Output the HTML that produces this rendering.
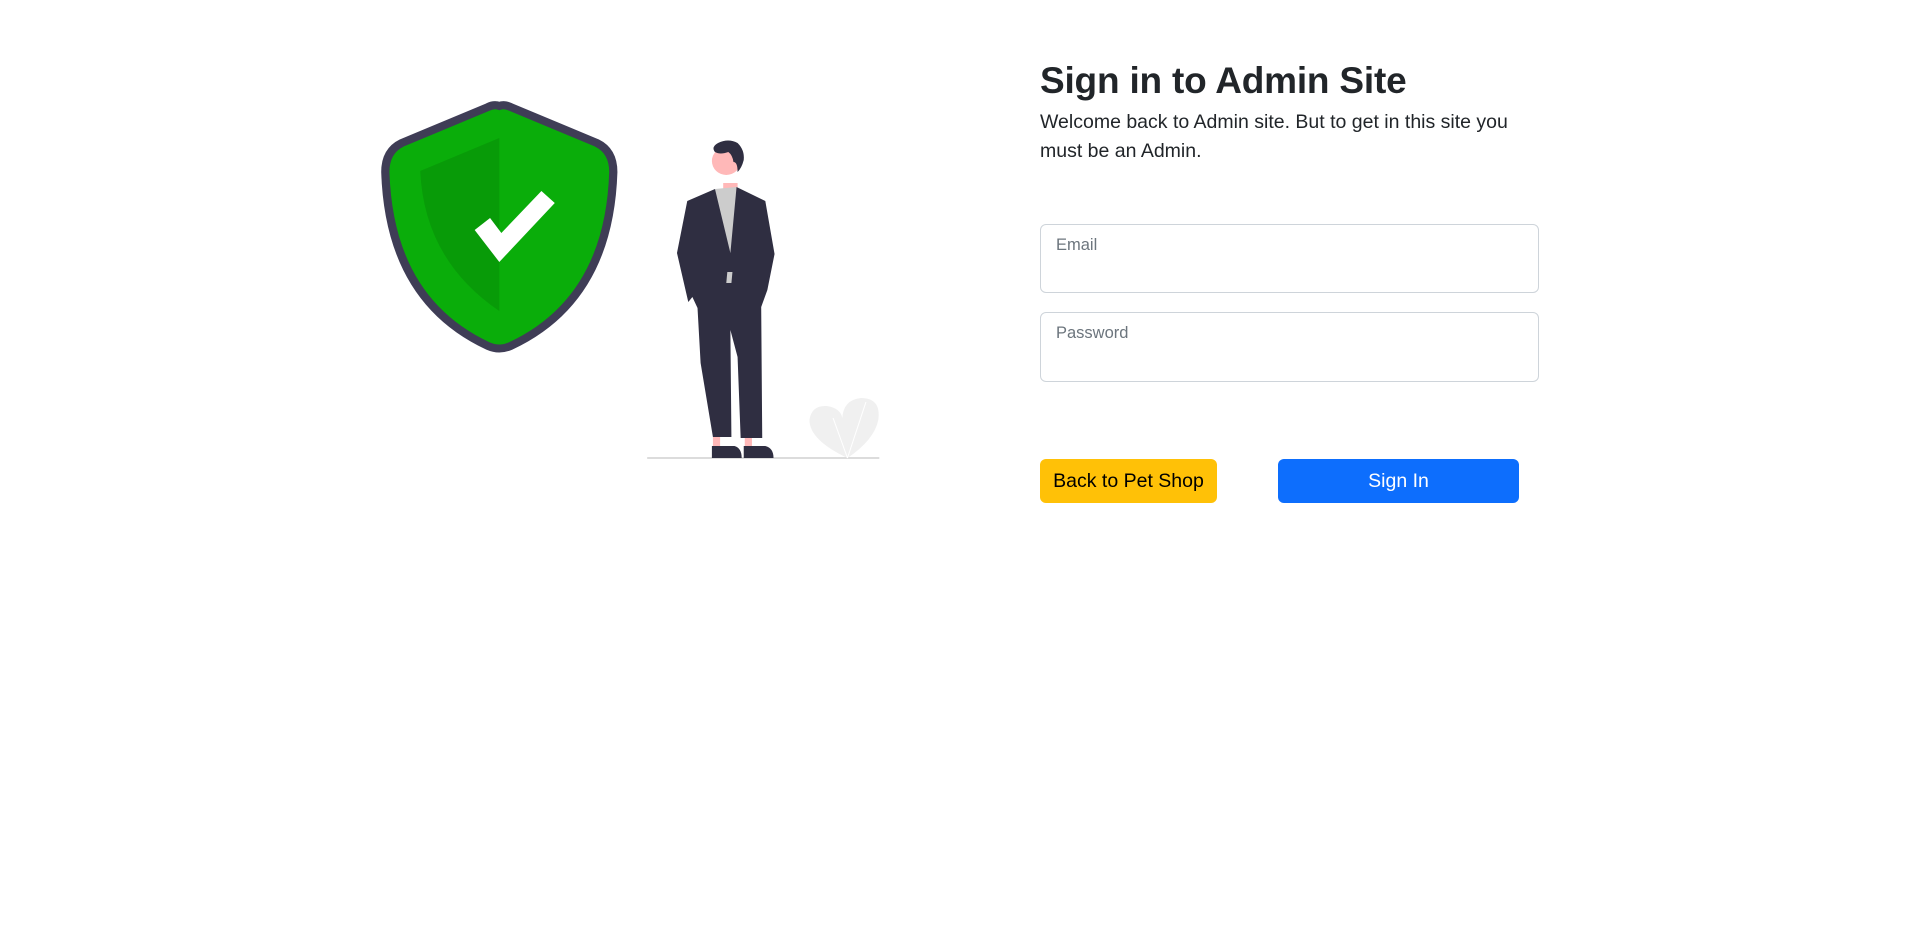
<!DOCTYPE html>
<html><head><meta charset="utf-8"><style>
html,body{margin:0;padding:0;background:#fff;width:1920px;height:933px;overflow:hidden;font-family:"Liberation Sans",sans-serif;color:#212529}
.abs{position:absolute}
h1{position:absolute;left:1040px;top:57px;margin:0;font-size:37px;font-weight:700;letter-spacing:-0.2px;line-height:48px;color:#212529}
p{position:absolute;left:1040px;top:108px;margin:0;width:490px;font-size:19.5px;line-height:29px;color:#212529}
.inp{position:absolute;left:1040px;width:497px;height:67px;border:1px solid #ced4da;border-radius:6px;background:#fff}
.inp span{position:absolute;left:15px;top:11px;font-size:16.5px;color:#6c757d}
.btn{position:absolute;top:459px;height:44px;border-radius:6px;font-size:19.5px;display:flex;align-items:center;justify-content:center}
</style></head><body>
<svg class="abs" style="left:0;top:0" width="900" height="480" viewBox="0 0 900 480">
<g transform="matrix(1.027,0,0,1,-7,0)">
<path d="M493,106 Q498,104 504,107 L588,143 Q604,151 604,172 Q600,300 504,346 Q493,351 482,346 Q386,300 382,172 Q382,151 398,143 L482,107 Q488,104 493,106 Z" fill="#0aad0a" stroke="#3f3d56" stroke-width="8"/>
<path d="M493,138 L416,171 Q420,260 493,311 Z" fill="#089b08"/>
<polygon points="469,230 484,218 495,233 534,191 547,203 493,262" fill="#fff"/>
<line x1="637" y1="458" x2="863" y2="458" stroke="#d0d0d0" stroke-width="1.5"/>
<path d="M832,458 Q795,440 795,420 Q797,405 812,406 Q825,408 827,418 Q828,400 845,398 Q865,398 862,420 Q858,440 832,458 Z" fill="#f0f0f0"/>
<path d="M832,458 L818,418 M832,458 L850,402" stroke="#fff" stroke-width="1"/>
<rect x="711" y="183" width="14" height="12" fill="#ffb8b8"/>
<circle cx="714" cy="161" r="14" fill="#ffb8b8"/>
<path d="M703,152 Q699,147 706,143 Q716,138 725,143 Q732,150 731,160 Q729,168 725,172 Q725,162 721,162 Q720,155 716,152 Q708,155 703,152 Z" fill="#2f2e41"/>
<polygon points="701,437 701,447 708,447 708,437" fill="#ffb8b8"/>
<polygon points="732,437 732,447 739,447 739,437" fill="#ffb8b8"/>
<polygon points="703,189 724,187 719,255 715,283 710,283" fill="#ccc"/>
<polygon points="676,201 703,189 718,253 724,187 752,201 761,254 754,290 748,307 749,438 728,438 725,357 718,330 719,437 701,437 689,363 686,308 681,297 677,302 666,253" fill="#2f2e41"/>
<polygon points="715,272 720,272 719,283 714,283" fill="#ccc"/>
<path d="M700,458 L700,446 L722,446 Q729,448 729,458 Z M731,458 L731,446 L752,446 Q760,448 760,458 Z" fill="#2f2e41"/>
</g>
</svg>
<h1>Sign in to Admin Site</h1>
<p>Welcome back to Admin site. But to get in this site you must be an Admin.</p>
<div class="inp" style="top:224px"><span>Email</span></div>
<div class="inp" style="top:312px;height:68px"><span>Password</span></div>
<div class="btn" style="left:1040px;width:177px;background:#ffc107;color:#000">Back to Pet Shop</div>
<div class="btn" style="left:1278px;width:241px;background:#0d6efd;color:#fff">Sign In</div>
</body></html>
